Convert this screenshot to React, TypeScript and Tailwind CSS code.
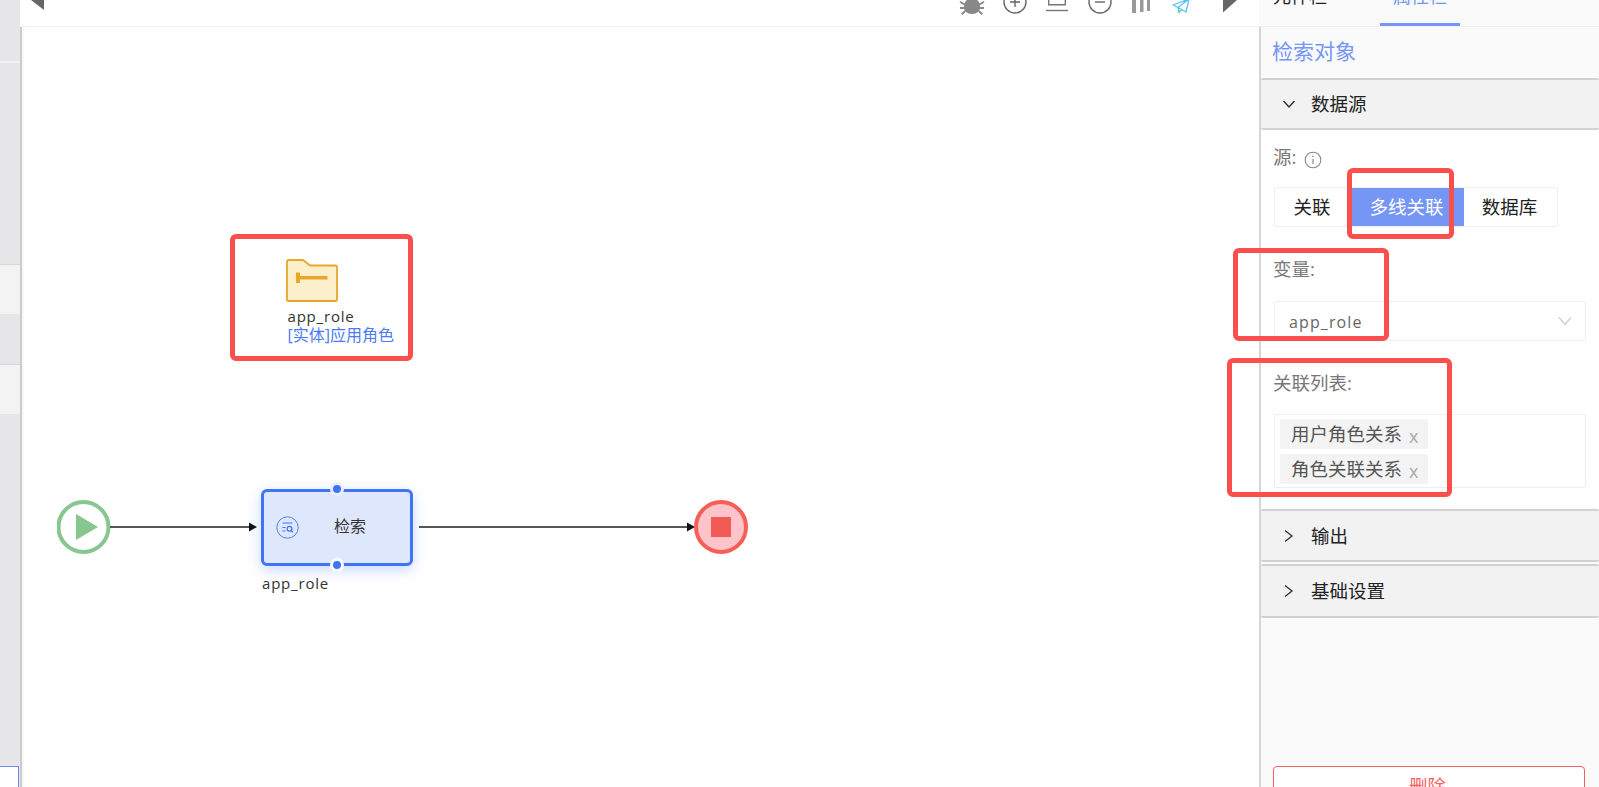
import React from "react";

const font = { fontFamily: '"Open Sans", "Noto Sans CJK SC", sans-serif' };

function StripRows() {
  return (
    <div className="flex h-full w-[20px] shrink-0 flex-col bg-[#e6e6e8]">
      <div className="h-[61px] shrink-0" />
      <div className="h-[2px] shrink-0 bg-[#f2f2f3]" />
      <div className="h-[202px] shrink-0 border-b border-[#d8d8da]" />
      <div className="h-[49px] shrink-0 bg-[#f3f3f3]" />
      <div className="h-[51px] shrink-0 border-b border-[#d8d8da]" />
      <div className="h-[49px] shrink-0 bg-[#f3f3f3]" />
      <div className="flex-1" />
      <div className="mr-[1px] h-[21px] shrink-0 border-t border-r border-[#6b8ef5] bg-white" />
    </div>
  );
}

function Toolbar() {
  return (
    <div className="flex h-[27px] shrink-0 items-start border-b border-[#eeeeee] bg-white">
      <svg className="ml-[11px] h-[10px] w-[13px]" viewBox="0 0 13 10"><path d="M0 0H13V10Z" fill="#666" /></svg>
      <svg className="ml-[915px] h-[16px] w-[26px]" viewBox="0 0 26 16" fill="#888">
        <path d="M8 0h10c2 1 3 4 3 7 0 4-3 7-8 7S5 11 5 7c0-3 1-6 3-7Z" />
        <path d="M1.5 1l5 3-1 1.6-5-3ZM24.5 1l-5 3 1 1.6 5-3ZM1 7h5v2H1ZM25 7h-5v2h5ZM2 13.5l4-3.5 1 1.5-3.5 3.5ZM24 13.5L20 10l-1 1.5 3.5 3.5Z" />
      </svg>
      <svg className="ml-[18px] h-[16px] w-[24px]" viewBox="0 0 24 16" fill="none" stroke="#666" strokeWidth="1.4">
        <circle cx="12" cy="2" r="11" />
        <path d="M12 -3V7M7 2H17" />
      </svg>
      <svg className="ml-[18px] h-[14px] w-[24px]" viewBox="0 0 24 14" fill="none" stroke="#777" strokeWidth="1.4">
        <path d="M3.7 0V4.8H20.3V0" />
        <path d="M1 10.5H23" />
      </svg>
      <svg className="ml-[19px] h-[16px] w-[24px]" viewBox="0 0 24 16" fill="none" stroke="#666" strokeWidth="1.4">
        <circle cx="12" cy="2" r="11" />
        <path d="M7 2H17" />
      </svg>
      <svg className="ml-[19px] h-[14px] w-[20px]" viewBox="0 0 20 14" fill="#999">
        <path d="M1 0H5V13H1ZM9 0H12.5V12H9ZM16 0H19V11H16Z" />
      </svg>
      <svg className="ml-[21px] h-[14px] w-[18px]" viewBox="0 0 18 14" fill="none" stroke="#5cc0ee" strokeWidth="1.3" strokeLinejoin="round">
        <path d="M17 -1L1 5L6 7.5L17 -1L14 12L9.5 9.5L6 7.5L7 12.5L9.5 9.5" />
      </svg>
      <svg className="ml-[33px] h-[13px] w-[14px]" viewBox="0 0 14 13"><path d="M0 0H14L0 12.5Z" fill="#666" /></svg>
    </div>
  );
}

function Canvas() {
  return (
    <div className="relative flex-1 border-l-2 border-[#cccccc] bg-white shadow-[inset_4px_0_4px_-3px_rgba(0,0,0,0.06)]">
      <svg className="absolute left-[264px] top-[232px] h-[43px] w-[52px]" viewBox="0 0 52 43">
        <path d="M1 2.5a1.5 1.5 0 0 1 1.5-1.5H17l7 5.5h25.5A1.5 1.5 0 0 1 51 8v33a1 1 0 0 1-1 1H2a1 1 0 0 1-1-1Z" fill="#fcefca" stroke="#e8a62a" strokeWidth="1.8" strokeLinejoin="round" />
        <path d="M10 13.5h4V17h27.5v3.6H14V24h-4Z" fill="#e8a62a" />
      </svg>
      <div className="absolute left-[265.5px] top-[280px] flex flex-col text-[15px] leading-[19px]" style={font}>
        <span className="tracking-[0.8px] text-[#333333]">app_role</span>
        <span className="text-[16px] text-[#4a7cf7]">[实体]应用角色</span>
      </div>

      <svg className="absolute left-[35px] top-[473px] h-[54px] w-[54px]" viewBox="0 0 54 54">
        <circle cx="26.5" cy="27" r="25" fill="#fff" stroke="#88c690" strokeWidth="4" />
        <path d="M19 14L41 27L19 40Z" fill="#88c690" />
      </svg>
      <svg className="absolute left-[88px] top-[494px] h-[12px] w-[148px]" viewBox="0 0 148 12">
        <path d="M0 6H140" stroke="#555" strokeWidth="1.8" />
        <path d="M139 1.5L147 6L139 10.5Z" fill="#111" />
      </svg>

      <div className="absolute left-[239px] top-[462px] flex h-[77px] w-[152px] items-center rounded-[6px] border-[3px] border-[#3d74fa] bg-[#dfe7fd] pl-[12px] shadow-[0_4px_14px_rgba(61,116,250,0.28)]">
        <svg className="h-[23px] w-[23px] shrink-0" viewBox="0 0 23 23" fill="none" stroke="#3d74fa">
          <circle cx="11.5" cy="11.5" r="10.7" strokeWidth="0.9" />
          <path d="M6.5 7H16.5M6.5 11.5H9.5M6.5 15H9.5" strokeWidth="1" />
          <circle cx="13.5" cy="12.8" r="2.4" strokeWidth="1.2" />
          <path d="M15 14.5L17 16.3" strokeWidth="1.2" />
        </svg>
        <span className="mb-[4px] ml-[35px] text-[16px] leading-none text-[#333333]" style={font}>检索</span>
      </div>
      <div className="absolute left-[308px] top-[455px] h-[14px] w-[14px] rounded-full border-[3px] border-[#eaf0fe] bg-[#3d74fa]" />
      <div className="absolute left-[308px] top-[531px] h-[14px] w-[14px] rounded-full border-[3px] border-[#ffffff] bg-[#3d74fa]" />
      <span className="absolute left-[240px] top-[547px] text-[15px] leading-[19px] tracking-[0.8px] text-[#333333]" style={font}>app_role</span>

      <svg className="absolute left-[397px] top-[494px] h-[12px] w-[277px]" viewBox="0 0 277 12">
        <path d="M0 6H269" stroke="#555" strokeWidth="1.8" />
        <path d="M268 1.5L276 6L268 10.5Z" fill="#111" />
      </svg>
      <svg className="absolute left-[672px] top-[473px] h-[54px] w-[54px]" viewBox="0 0 54 54">
        <circle cx="27" cy="27" r="25" fill="#ffc4ca" stroke="#f55f58" strokeWidth="4" />
        <rect x="17" y="17" width="20" height="20" fill="#f45a55" />
      </svg>
    </div>
  );
}

function SectionHeader({ title, open, h }: { title: string; open?: boolean; h: string }) {
  return (
    <div className={`flex ${h} shrink-0 items-center rounded-[2px] border-y-2 border-[#d2d2d2] bg-[#f2f2f2] pl-[21px] text-[18.5px] text-[#222222]`}>
      <svg className="h-[14px] w-[14px] shrink-0" viewBox="0 0 14 14" fill="none" stroke="#333344" strokeWidth="1.4">
        {open ? <path d="M1.5 4L7 10L12.5 4" /> : <path d="M3 1.5L10 7L3 12.5" />}
      </svg>
      <span className="ml-[15px]">{title}</span>
    </div>
  );
}

function Tag({ text }: { text: string }) {
  return (
    <div className="flex h-[30px] w-[148px] items-center rounded-[2px] bg-[#f3f3f3] pl-[11px] text-[18.5px] text-[#555555]">
      <span>{text}</span>
      <span className="ml-[7px] mt-[3px] text-[18px] leading-none text-[#aaaaaa]">x</span>
    </div>
  );
}

function Panel() {
  return (
    <div className="flex w-[340px] shrink-0 flex-col bg-[#fafafa] text-[18.5px]">
      <div className="flex h-[27px] shrink-0 items-end overflow-hidden border-b border-[#eeeeee] text-[18px]">
        <div className="mb-[1px] ml-[1px] mr-[40px] flex h-[24px] w-[80px] shrink-0 items-end justify-center">
          <span className="mb-[16px] whitespace-nowrap leading-[26px] text-[#222222]">元件栏</span>
        </div>
        <div className="flex h-[26px] w-[80px] shrink-0 items-end justify-center border-b-[3px] border-[#7596f5]">
          <span className="mb-[14px] whitespace-nowrap leading-[26px] text-[#7596f5]">属性栏</span>
        </div>
      </div>
      <div className="flex flex-1 flex-col border-l-2 border-[#d6d6d6]">
        <div className="flex h-[51px] shrink-0 items-center pb-[2px] pl-[11px] text-[21px] text-[#7596f5]">检索对象</div>
        <SectionHeader title="数据源" open h="h-[52px]" />
        <div className="flex h-[377px] shrink-0 flex-col items-start bg-white pl-[12px] pr-[13px]">
          <div className="mt-[15px] flex h-[24px] items-center text-[#777777]">
            <span>源:</span>
            <svg className="ml-[8px] mt-[5px] h-[18px] w-[18px]" viewBox="0 0 18 18" fill="none" stroke="#888888">
              <circle cx="9" cy="9" r="7.8" strokeWidth="1.1" />
              <path d="M9 8V13" strokeWidth="1.2" />
              <path d="M9 4.8V6.2" strokeWidth="1.4" />
            </svg>
          </div>
          <div className="ml-[1px] mt-[18px] flex h-[40px] rounded-[2px] border border-[#eeeeee] text-[#222222]">
            <div className="flex w-[77px] items-center justify-center pr-[3px]">关联</div>
            <div className="flex w-[112px] items-center justify-center bg-[#7596f5] pr-[3px] text-white">多线关联</div>
            <div className="flex w-[93px] items-center justify-center pr-[2px]">数据库</div>
          </div>
          <div className="mt-[30px] flex h-[24px] items-center text-[#777777]">变量:</div>
          <div className="ml-[1px] mt-[20px] flex h-[40px] w-[312px] items-center justify-between rounded-[2px] border border-[#eeeeee] pl-[14px] pr-[13px]">
            <span className="mt-[2px] text-[16px] tracking-[1.1px] text-[#666666]">app_role</span>
            <svg className="h-[10px] w-[14px]" viewBox="0 0 14 10" fill="none" stroke="#cccccc" strokeWidth="1.2"><path d="M1 1.5L7 8.5L13 1.5" /></svg>
          </div>
          <div className="mt-[30px] flex h-[24px] items-center text-[#777777]">关联列表:</div>
          <div className="ml-[1px] mt-[19px] flex h-[74px] w-[312px] flex-col gap-[5px] rounded-[2px] border border-[#eeeeee] pl-[5px] pt-[4px]">
            <Tag text="用户角色关系" />
            <Tag text="角色关联关系" />
          </div>
        </div>
        <div className="h-[2px] shrink-0" />
        <SectionHeader title="输出" h="h-[53px]" />
        <div className="h-[2px] shrink-0" />
        <SectionHeader title="基础设置" h="h-[54px]" />
        <div className="ml-[12px] mt-[148px] flex h-[40px] w-[312px] shrink-0 items-center justify-center rounded-[4px] border border-[#f45f5f] bg-white pr-[3px] text-[#f45f5f]">删除</div>
      </div>
    </div>
  );
}

function Note({ className }: { className: string }) {
  return <div className={`pointer-events-none absolute rounded-[6px] border-[5px] border-[#f9504d] ${className}`} />;
}

export default function App() {
  return (
    <div className="relative flex h-[787px] w-[1599px] overflow-hidden bg-white" style={font}>
      <StripRows />
      <div className="flex min-w-0 flex-1 flex-col">
        <Toolbar />
        <Canvas />
      </div>
      <Panel />
      <Note className="left-[230px] top-[234px] h-[127px] w-[183px]" />
      <Note className="left-[1347px] top-[168px] h-[71px] w-[107px]" />
      <Note className="left-[1233px] top-[248px] h-[93px] w-[156px]" />
      <Note className="left-[1227px] top-[358px] h-[139px] w-[225px]" />
    </div>
  );
}
